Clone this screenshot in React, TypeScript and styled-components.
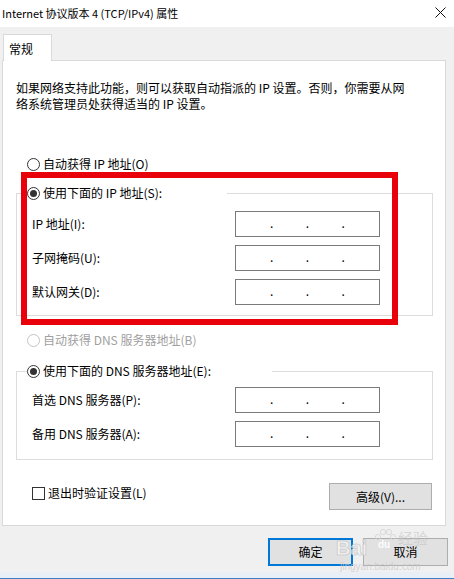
import React from 'react'
import styled, { createGlobalStyle } from 'styled-components'

const GlobalStyle = createGlobalStyle`
  html, body {
    margin: 0;
    padding: 0;
    background: #f0f0f0;
  }
  body {
    font-family: "Noto Sans CJK SC", "Microsoft YaHei UI", sans-serif;
    font-size: 12px;
    color: #000;
  }
`

const ipFields = ['IP 地址(I):', '子网掩码(U):', '默认网关(D):']
const dnsFields = ['首选 DNS 服务器(P):', '备用 DNS 服务器(A):']

const IpInput: React.FC = () => (
  <IpBox>
    <span />
    <Dot>.</Dot>
    <span />
    <Dot>.</Dot>
    <span />
    <Dot>.</Dot>
    <span />
  </IpBox>
)

const App: React.FC = () => {
  return (
    <Window>
      <GlobalStyle />
      <TitleBar>
        <Title>Internet 协议版本 4 (TCP/IPv4) 属性</Title>
        <CloseButton>
          <svg width="11" height="11" viewBox="0 0 11 11">
            <path d="M0.5 0.5 L10.5 10.5 M10.5 0.5 L0.5 10.5" stroke="#111" strokeWidth="1" />
          </svg>
        </CloseButton>
      </TitleBar>

      <Content>
        <TabStrip>
          <Tab>常规</Tab>
        </TabStrip>
        <Panel>
          <Description>
            如果网络支持此功能，则可以获取自动指派的 IP 设置。否则，你需要从网
            <br />
            络系统管理员处获得适当的 IP 设置。
          </Description>

          <OptionRow top={44}>
            <Radio />
            自动获得 IP 地址(O)
          </OptionRow>

          <Group top={13} bottom={10}>
            <Legend width={200}>
              <Radio checked />
              使用下面的 IP 地址(S):
            </Legend>
            <GroupBody top={10}>
              {ipFields.map((f) => (
                <FieldRow key={f}>
                  <FieldLabel>{f}</FieldLabel>
                  <IpInput />
                </FieldRow>
              ))}
            </GroupBody>
          </Group>

          <OptionRow top={16} disabled>
            <Radio disabled />
            自动获得 DNS 服务器地址(B)
          </OptionRow>

          <Group top={15} bottom={12}>
            <Legend width={245}>
              <Radio checked />
              使用下面的 DNS 服务器地址(E):
            </Legend>
            <GroupBody top={8}>
              {dnsFields.map((f) => (
                <FieldRow key={f}>
                  <FieldLabel>{f}</FieldLabel>
                  <IpInput />
                </FieldRow>
              ))}
            </GroupBody>
          </Group>

          <BottomRow>
            <CheckRow>
              <CheckBox />
              退出时验证设置(L)
            </CheckRow>
            <Button width={103} height={27}>高级(V)...</Button>
          </BottomRow>
        </Panel>
      </Content>

      <Footer>
        <Button width={85} height={28} primary>确定</Button>
        <Button width={85} height={28}>取消</Button>
      </Footer>
      <WindowEdge />

      <Annotation />
      <Watermark>
        <WmBai>Bai</WmBai>
        <WmPaw>
          <svg width="26" height="26" viewBox="0 0 26 26">
            <circle cx="6" cy="9" r="2.6" fill="none" stroke="#d8d8d8" />
            <circle cx="11" cy="4" r="2.6" fill="none" stroke="#d8d8d8" />
            <circle cx="17" cy="4" r="2.6" fill="none" stroke="#d8d8d8" />
            <circle cx="21" cy="9" r="2.6" fill="none" stroke="#d8d8d8" />
            <path d="M5 22 Q5 13 13.5 12 Q22 13 22 22 Z" fill="#e2e2e2" />
          </svg>
          <WmDu>du</WmDu>
        </WmPaw>
        <WmJing>经验</WmJing>
        <WmUrl>jingyan.baidu.com</WmUrl>
      </Watermark>
    </Window>
  )
}

const Window = styled.div`
  position: relative;
  width: 454px;
  height: 579px;
  background: #f0f0f0;
  display: flex;
  flex-direction: column;
  overflow: hidden;
`

const TitleBar = styled.div`
  height: 27px;
  background: #fff;
  display: flex;
  align-items: center;
  justify-content: space-between;
  padding: 0 8px 0 2px;
  box-sizing: border-box;
`

const Title = styled.div`
  font-size: 11px;
  line-height: 16px;
  margin-top: -2px;
`

const CloseButton = styled.div`
  display: flex;
  align-items: center;
  margin-top: -3px;
`

const Content = styled.div`
  padding: 7px 8px 0 2px;
  display: flex;
  flex-direction: column;
`

const TabStrip = styled.div`
  display: flex;
  padding-left: 1px;
  position: relative;
  z-index: 1;
  margin-bottom: -1px;
`

const Tab = styled.div`
  width: 49px;
  height: 27px;
  box-sizing: border-box;
  background: #fff;
  border: 1px solid #d9d9d9;
  border-bottom: none;
  padding: 6px 0 0 5px;
  line-height: 16px;
`

const Panel = styled.div`
  height: 466px;
  box-sizing: border-box;
  background: #fff;
  border: 1px solid #d9d9d9;
  padding: 19px 12px 0 13px;
  display: flex;
  flex-direction: column;
`

const Description = styled.div`
  line-height: 16px;
  white-space: nowrap;
`

const OptionRow = styled.div<{ top: number; disabled?: boolean }>`
  display: flex;
  align-items: center;
  gap: 3px;
  height: 16px;
  line-height: 16px;
  margin-top: ${({ top }) => top}px;
  padding-left: 11px;
  color: ${({ disabled }) => (disabled ? '#a0a0a0' : '#000')};
`

const Radio = styled.span<{ checked?: boolean; disabled?: boolean }>`
  width: 13px;
  height: 13px;
  box-sizing: border-box;
  border-radius: 50%;
  border: 1px solid ${({ disabled }) => (disabled ? '#c4c4c4' : '#333')};
  background: #fff;
  display: inline-flex;
  align-items: center;
  justify-content: center;
  flex: none;

  &::after {
    content: '';
    width: 7px;
    height: 7px;
    border-radius: 50%;
    background: #333;
    display: ${({ checked }) => (checked ? 'block' : 'none')};
  }
`

const Group = styled.fieldset<{ top: number; bottom: number }>`
  margin: ${({ top }) => top}px 0 0 0;
  padding: 0 0 ${({ bottom }) => bottom}px 0;
  min-width: 0;
  border: 1px solid #dcdcdc;
`

const Legend = styled.legend<{ width: number }>`
  display: flex;
  align-items: center;
  gap: 3px;
  box-sizing: border-box;
  width: ${({ width }) => width}px;
  height: 16px;
  line-height: 16px;
  padding: 0;
  margin-left: 10px;
  white-space: nowrap;
`

const GroupBody = styled.div<{ top: number }>`
  padding: ${({ top }) => top}px 0 0 15px;
  display: flex;
  flex-direction: column;
  gap: 8px;
`

const FieldRow = styled.div`
  display: grid;
  grid-template-columns: 203px 145px;
  align-items: center;
`

const FieldLabel = styled.div`
  line-height: 16px;
`

const IpBox = styled.div`
  height: 26px;
  box-sizing: border-box;
  border: 1px solid #7a7a7a;
  background: #fff;
  display: grid;
  grid-template-columns: 1fr 0 1fr 0 1fr 0 1fr;
  align-items: center;
`

const Dot = styled.span`
  display: flex;
  justify-content: center;
  line-height: 16px;
  font-size: 12px;
  margin-top: -2px;
`

const BottomRow = styled.div`
  margin-top: 23px;
  display: flex;
  justify-content: space-between;
  align-items: flex-start;
  padding: 0 1px 0 16px;
`

const CheckRow = styled.div`
  display: flex;
  align-items: center;
  gap: 3px;
  height: 16px;
  line-height: 16px;
  margin-top: 2px;
`

const CheckBox = styled.span`
  width: 13px;
  height: 13px;
  box-sizing: border-box;
  border: 1px solid #333;
  background: #fff;
  flex: none;
`

const Button = styled.div<{ width: number; height: number; primary?: boolean }>`
  width: ${({ width }) => width}px;
  height: ${({ height }) => height}px;
  box-sizing: border-box;
  background: #e1e1e1;
  border: ${({ primary }) => (primary ? '2px solid #0078d7' : '1px solid #adadad')};
  display: flex;
  align-items: center;
  justify-content: center;
  line-height: 16px;
`

const Footer = styled.div`
  display: flex;
  justify-content: flex-end;
  gap: 10px;
  padding: 12px 6px 0 0;
`

const WindowEdge = styled.div`
  margin-top: auto;
  height: 7px;
  box-sizing: border-box;
  background: #e9eff7;
  border-bottom: 1px solid #3b7fc4;
`

const Annotation = styled.div`
  position: absolute;
  left: 21px;
  top: 172px;
  width: 377px;
  height: 153px;
  box-sizing: border-box;
  border: 6px solid #e8000b;
  pointer-events: none;
`

const Watermark = styled.div`
  position: absolute;
  left: 336px;
  top: 526px;
  width: 110px;
  height: 46px;
  pointer-events: none;
  opacity: 0.9;
`

const WmBai = styled.span`
  position: absolute;
  left: 0;
  top: 11px;
  font-family: "Liberation Sans", sans-serif;
  font-weight: bold;
  font-size: 20px;
  line-height: 22px;
  color: rgba(255, 255, 255, 0.75);
  -webkit-text-stroke: 1px #d0d0d0;
`

const WmPaw = styled.span`
  position: absolute;
  left: 36px;
  top: 2px;
  width: 26px;
  height: 26px;
`

const WmDu = styled.span`
  position: absolute;
  left: 6px;
  top: 12px;
  font-family: "Liberation Sans", sans-serif;
  font-weight: bold;
  font-size: 10px;
  line-height: 10px;
  color: #fff;
`

const WmJing = styled.span`
  position: absolute;
  left: 62px;
  top: 4px;
  font-size: 15px;
  line-height: 15px;
  color: rgba(200, 200, 200, 0.7);
`

const WmUrl = styled.span`
  position: absolute;
  left: 4px;
  top: 36px;
  font-family: "Liberation Sans", sans-serif;
  font-size: 10px;
  line-height: 10px;
  color: rgba(200, 200, 200, 0.8);
`

export default App
